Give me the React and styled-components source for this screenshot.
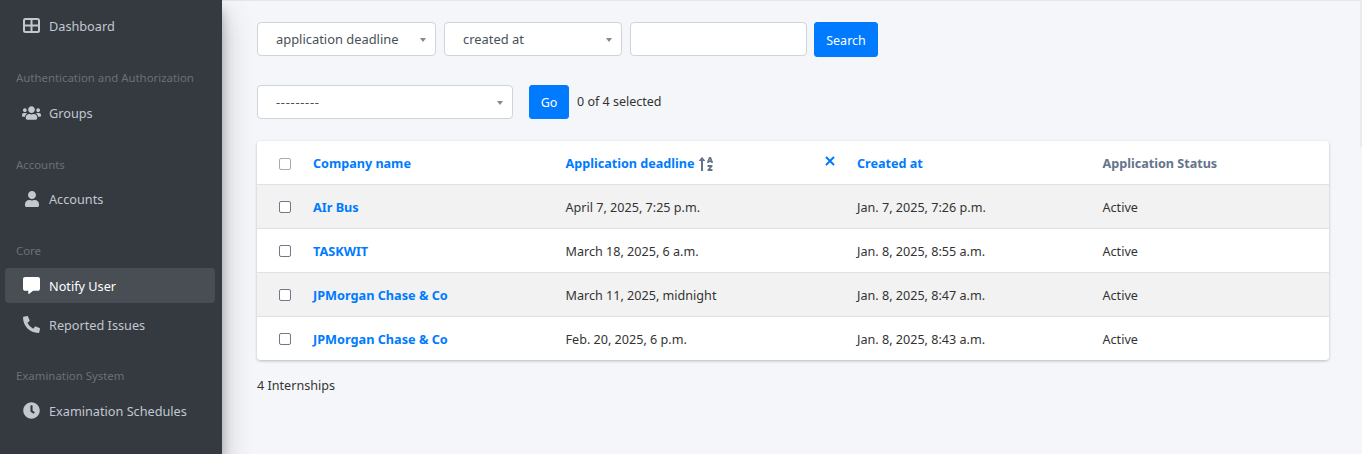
import React from "react";
import styled, { createGlobalStyle } from "styled-components";
import { FaUsers, FaUser, FaCommentAlt, FaPhoneAlt, FaClock, FaSortAlphaUp } from "react-icons/fa";

const Global = createGlobalStyle`
  html, body { margin: 0; padding: 0; height: 100%; overflow: hidden; }
  body { font-family: "Noto Sans", sans-serif; font-size: 12.6px; color: #333; background: #f4f6f9; }
  * { box-sizing: border-box; }
`;

const Page = styled.div`
  position: relative;
  display: flex;
  width: 1362px;
  height: 454px;
  overflow: hidden;
`;

const Sidebar = styled.aside`
  flex: none;
  width: 222px;
  background: #343a40;
  padding: 8px 7px 0 5px;
  box-shadow: 0 14px 28px rgba(0, 0, 0, 0.25), 0 10px 10px rgba(0, 0, 0, 0.22);
  z-index: 2;
`;

const Section = styled.div`
  color: #6c7075;
  font-size: 11.4px;
  line-height: 18px;
  padding-left: 11px;
  margin-top: ${(p) => p.$top}px;
  margin-bottom: ${(p) => p.$bottom}px;
`;

const NavItem = styled.div`
  display: flex;
  align-items: center;
  height: 35px;
  border-radius: 4px;
  padding-left: 17px;
  gap: 8px;
  margin-top: ${(p) => p.$top || 0}px;
  color: ${(p) => (p.$active ? "#fff" : "#c2c7d0")};
  background: ${(p) => (p.$active ? "rgba(255, 255, 255, 0.1)" : "transparent")};
  font-size: 12.7px;
`;

const NavIcon = styled.span`
  flex: none;
  width: 19px;
  display: flex;
  justify-content: center;
  font-size: ${(p) => p.$size || 17}px;
`;

const Main = styled.main`
  flex: 1;
  min-width: 0;
  padding: 22px 33px 0 35px;
  border-top: 1px solid #e4e6ea;
`;

const ScrollThumb = styled.div`
  position: absolute;
  top: 0;
  right: 0;
  width: 2px;
  height: 147px;
  background: #e9ebef;
`;

const Toolbar = styled.div`
  display: flex;
  align-items: flex-start;
  gap: 8px;
  margin-top: -1px;
`;

const Select = styled.div`
  position: relative;
  width: ${(p) => p.$width}px;
  height: 34px;
  background: #fff;
  border: 1px solid #ced4da;
  border-radius: 4px;
  padding-left: 18px;
  display: flex;
  align-items: center;
  color: #495057;
  font-size: 12.9px;
  &::after {
    content: "";
    position: absolute;
    right: 9px;
    top: 15px;
    border-left: 3.5px solid transparent;
    border-right: 3.5px solid transparent;
    border-top: 4px solid #888;
  }
`;

const Dashes = styled.span`
  letter-spacing: 0.7px;
`;

const SearchInput = styled.div`
  width: 177px;
  height: 34px;
  background: #fff;
  border: 1px solid #ced4da;
  border-radius: 4px;
`;

const BlueButton = styled.button`
  background: #007bff;
  border: 1px solid #007bff;
  color: #fff;
  border-radius: 3px;
  font-family: inherit;
  font-size: 12.5px;
  height: ${(p) => p.$height}px;
  width: ${(p) => p.$width}px;
  margin-left: ${(p) => p.$left || 0}px;
  padding: 1px 0 0;
`;

const ActionRow = styled.div`
  display: flex;
  align-items: flex-start;
  margin-top: 28px;
`;

const SelectedText = styled.span`
  margin-left: 8px;
  line-height: 33px;
  font-size: 12.5px;
  color: #333;
`;

const Card = styled.div`
  margin-top: 22px;
  background: #fff;
  border-radius: 4px;
  box-shadow: 0 1px 3px rgba(0, 0, 0, 0.25);
  overflow: hidden;
`;

const Row = styled.div`
  display: grid;
  grid-template-columns: 56px 252.5px 291.5px 245.5px 1fr;
  align-items: center;
  height: ${(p) => (p.$last ? 43 : 44)}px;
  background: ${(p) => (p.$shade ? "#f2f2f2" : "#fff")};
  border-bottom: ${(p) => (p.$last ? "none" : "1px solid #dee2e6")};
`;

const CheckCell = styled.div`
  display: flex;
  padding-left: 22px;
`;

const Check = styled.span`
  width: 12px;
  height: 12px;
  margin-top: ${(p) => (p.$head ? 2 : 0)}px;
  background: #fff;
  border: 1px solid ${(p) => (p.$head ? "#a9a9b3" : "#76768a")};
  border-radius: 2px;
`;

const HeadCell = styled.div`
  position: relative;
  display: flex;
  align-items: center;
  gap: 4px;
  padding-top: 2px;
  font-weight: 700;
  font-size: 12.6px;
  color: ${(p) => (p.$muted ? "#64748b" : "#007bff")};
`;

const ClearSort = styled.span`
  position: absolute;
  right: 22px;
  top: 3px;
  display: flex;
  color: #007bff;
`;

const CompanyLink = styled.a`
  padding-top: 1px;
  color: #007bff;
  font-weight: 700;
  font-size: 12.7px;
`;

const Cell = styled.div`
  padding-top: 1px;
  color: #333;
  font-size: 12.6px;
`;

const Count = styled.p`
  margin: 17px 0 0;
  line-height: 18px;
  font-size: 12.6px;
  color: #333;
`;

const GridIcon = () => (
  <svg width="17" height="15" viewBox="0 0 17 15" fill="none" stroke="currentColor" strokeWidth="2">
    <rect x="1" y="1" width="15" height="13" rx="1.5" />
    <path d="M8.5 1v13M1 7.5h15" />
  </svg>
);

const rows = [
  ["AIr Bus", "April 7, 2025, 7:25 p.m.", "Jan. 7, 2025, 7:26 p.m."],
  ["TASKWIT", "March 18, 2025, 6 a.m.", "Jan. 8, 2025, 8:55 a.m."],
  ["JPMorgan Chase & Co", "March 11, 2025, midnight", "Jan. 8, 2025, 8:47 a.m."],
  ["JPMorgan Chase & Co", "Feb. 20, 2025, 6 p.m.", "Jan. 8, 2025, 8:43 a.m."],
];

export default function App() {
  return (
    <Page>
      <Global />
      <Sidebar>
        <NavItem>
          <NavIcon><GridIcon /></NavIcon>Dashboard
        </NavItem>
        <Section $top={26} $bottom={8}>Authentication and Authorization</Section>
        <NavItem>
          <NavIcon $size={20}><FaUsers /></NavIcon>Groups
        </NavItem>
        <Section $top={26} $bottom={7}>Accounts</Section>
        <NavItem>
          <NavIcon $size={16}><FaUser /></NavIcon>Accounts
        </NavItem>
        <Section $top={26} $bottom={8}>Core</Section>
        <NavItem $active>
          <NavIcon><FaCommentAlt /></NavIcon>Notify User
        </NavItem>
        <NavItem $top={4}>
          <NavIcon><FaPhoneAlt /></NavIcon>Reported Issues
        </NavItem>
        <Section $top={25} $bottom={8}>Examination System</Section>
        <NavItem>
          <NavIcon><FaClock /></NavIcon>Examination Schedules
        </NavItem>
      </Sidebar>
      <Main>
        <Toolbar>
          <Select $width={179}>application deadline</Select>
          <Select $width={178}>created at</Select>
          <SearchInput />
          <BlueButton $width={64} $height={35} $left={-1}>Search</BlueButton>
        </Toolbar>
        <ActionRow>
          <Select $width={256}><Dashes>---------</Dashes></Select>
          <BlueButton $width={40} $height={34} $left={16}>Go</BlueButton>
          <SelectedText>0 of 4 selected</SelectedText>
        </ActionRow>
        <Card>
          <Row>
            <CheckCell><Check $head /></CheckCell>
            <HeadCell>Company name</HeadCell>
            <HeadCell>
              Application deadline
              <FaSortAlphaUp color="#64748b" size={16} />
              <ClearSort>
                <svg width="10" height="10" viewBox="0 0 10 10" stroke="currentColor" strokeWidth="2">
                  <path d="M1 1l8 8M9 1l-8 8" />
                </svg>
              </ClearSort>
            </HeadCell>
            <HeadCell>Created at</HeadCell>
            <HeadCell $muted>Application Status</HeadCell>
          </Row>
          {rows.map((r, i) => (
            <Row key={i} $shade={i % 2 === 0} $last={i === rows.length - 1}>
              <CheckCell><Check /></CheckCell>
              <CompanyLink>{r[0]}</CompanyLink>
              <Cell>{r[1]}</Cell>
              <Cell>{r[2]}</Cell>
              <Cell>Active</Cell>
            </Row>
          ))}
        </Card>
        <Count>4 Internships</Count>
      </Main>
      <ScrollThumb />
    </Page>
  );
}
